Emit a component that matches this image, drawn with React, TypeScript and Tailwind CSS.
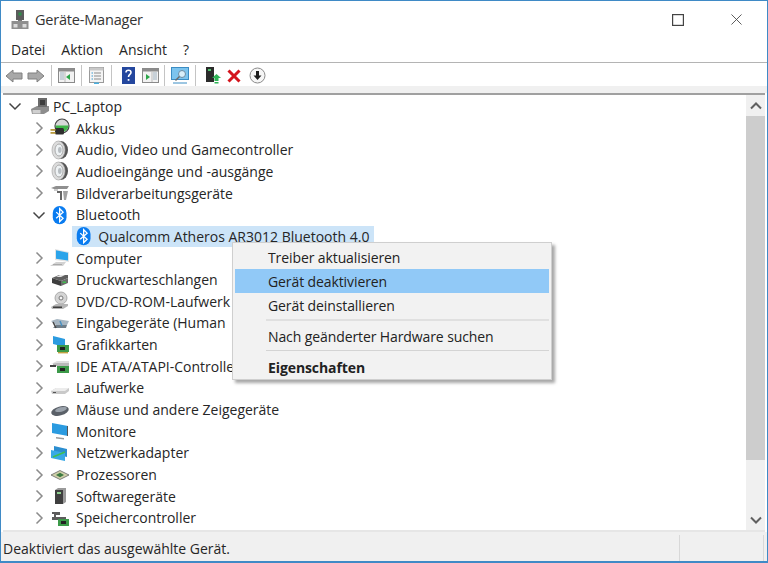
import React from "react";
import { X } from "lucide-react";

const Bt = () => (
  <svg width="15.3" height="20.4" viewBox="0 0 20 24">
    <rect x="1" y="0" width="18" height="24" rx="9" fill="#0a7cf0" />
    <path d="M5.500 8l9 8-4.500 4.500V3.500l4.500 4.500-9 8" fill="none" stroke="#fff" strokeWidth="1.700" />
  </svg>
);

const Right = () => (
  <svg width="16" height="16" viewBox="0 0 16 16" className="shrink-0">
    <path d="M5.500 2.500l5.500 5.500-5.500 5.500" fill="none" stroke="#8c8c8c" strokeWidth="1.500" />
  </svg>
);
const Down = ({ c = "#444" }: { c?: string }) => (
  <svg width="16" height="16" viewBox="0 0 16 16" className="shrink-0">
    <path d="M2.500 5.500l5.500 5.500 5.500-5.500" fill="none" stroke={c} strokeWidth="1.500" />
  </svg>
);

const S = ({ children }: { children: React.ReactNode }) => (
  <svg width="20" height="20" viewBox="0 0 20 20">{children}</svg>
);

const icons: Record<string, React.ReactNode> = {
  pc: <S><path d="M1 13l6-3h12v5l-5 3H2z" fill="#8d8d8d" /><rect x="8" y="2" width="9" height="9" fill="#6b6b6b" /><rect x="10" y="4" width="5" height="5" fill="#3c3c3c" /><rect x="2.500" y="14" width="8" height="3.500" fill="#d0d0d0" /></S>,
  akku: <S><circle cx="12" cy="8" r="7" fill="#d8d8d8" stroke="#444" strokeWidth="1.200" /><path d="M5.500 7.500h13a6.500 6.500 0 0 1-13 0z" fill="#3fb548" /><rect x="5" y="10" width="9" height="6.500" rx="1.500" fill="#2e2e2e" /><rect x="0.500" y="11" width="5" height="1.800" fill="#b89a3c" /><rect x="0.500" y="14" width="5" height="1.800" fill="#b89a3c" /></S>,
  audio: <S><ellipse cx="11" cy="10" rx="7" ry="9" fill="#565656" /><ellipse cx="8.500" cy="10" rx="6.500" ry="9" fill="#dcdcdc" stroke="#a8a8a8" strokeWidth="0.700" /><ellipse cx="9" cy="10" rx="4" ry="6" fill="#eef2f4" stroke="#9a9a9a" strokeWidth="0.800" /><ellipse cx="9.800" cy="10" rx="1.800" ry="3" fill="#b8bec2" /></S>,
  img: <S><path d="M1 5l5-2h13l-2 3H4z" fill="#8f8f8f" /><rect x="4" y="6" width="4" height="2" fill="#ccc" /><path d="M7 8h5v9h-2v-7H7z" fill="#666" /><path d="M13 8h5l-2 9h-2z" fill="#a2a2a2" /></S>,
  computer: <S><path d="M5 1l14 3v10L5 12z" fill="#e4e4e4" /><path d="M6 2.200l12 2.600v7.800L6 10.800z" fill="#2ba4ea" /><path d="M0 18l6-4h10l-3 4z" fill="#d2d2d2" /><path d="M3 16.500h9" stroke="#aaa" /></S>,
  print: <S><path d="M2 8l7-3h9v3l-7 3z" fill="#5f5f5f" /><path d="M2 8l9 3v5l-9-3z" fill="#3e3e3e" /><path d="M11 11l7-3v5l-7 3z" fill="#6c6c6c" /><path d="M6 7l4-2h5l-4 2z" fill="#e2e2e2" /><rect x="12.500" y="11.500" width="3.500" height="1.500" fill="#3fbf4f" /></S>,
  dvd: <S><circle cx="11" cy="7" r="6" fill="#d4d4d4" stroke="#9c9c9c" strokeWidth="0.800" /><circle cx="11" cy="7" r="2" fill="#f5f5f5" stroke="#777" /><path d="M1 16l5-3h12v2l-5 3H2z" fill="#b5b5b5" /><rect x="3" y="15.500" width="9" height="1.500" fill="#3f3f3f" /></S>,
  input: <S><path d="M1 8l6-2 12 2-2 4H6z" fill="#a7b6c2" /><path d="M6 12h11l-1 3H3z" fill="#6f7d88" /><path d="M3 9l3 6" stroke="#4a4a4a" strokeWidth="1.500" /><path d="M10 8l2 5" stroke="#4a90c0" strokeWidth="1.500" /></S>,
  gpu: <S><path d="M3 1l12 3v8L3 9z" fill="#2b9be0" /><rect x="7" y="10" width="12" height="7" fill="#3c9a49" /><rect x="10" y="12" width="5" height="3" fill="#222" /><rect x="8" y="17" width="10" height="1.400" fill="#c0a040" /></S>,
  ide: <S><path d="M3 7h16v3H3z" fill="#b9b9b9" /><path d="M1 8l6-3h12v2H7z" fill="#dedede" /><rect x="7" y="10" width="12" height="7" fill="#3c9a49" /><rect x="10" y="12" width="5" height="3" fill="#222" /><rect x="0" y="9" width="6" height="2" fill="#444" /></S>,
  drive: <S><path d="M1 13l5-3h13v3l-4 3H2z" fill="#c9c9c9" /><path d="M6 10h13l-4 3H1z" fill="#ececec" /><rect x="3" y="14" width="3" height="1" fill="#555" /></S>,
  mouse: <S><ellipse cx="10" cy="11" rx="9" ry="4.500" transform="rotate(-14 10 11)" fill="#5a6068" /><ellipse cx="11" cy="9.500" rx="6" ry="2.200" transform="rotate(-14 11 9.500)" fill="#9aa2ab" /></S>,
  monitor: <S><path d="M2 2l16 3v10L2 12z" fill="#2b9be0" /><path d="M17 5h1v10h-1z" fill="#555" /><path d="M6 16l8 1v1.500l-8-1z" fill="#9a9a9a" /></S>,
  net: <S><path d="M4 3l13 3v8L4 11z" fill="#2b8ed0" /><path d="M1 7l14 3v8L1 15z" fill="#37a9e6" /><path d="M3 14l12-5" stroke="#3fbf4f" strokeWidth="1.500" /></S>,
  cpu: <S><path d="M1 10l9-4.500 9 4.500-9 4.500z" fill="#cfcfa8" stroke="#666" strokeWidth="0.800" /><path d="M6 10l4-2.200 4 2.200-4 2.200z" fill="#3c7a42" /></S>,
  soft: <S><path d="M5 4l3-2h8v14l-3 2H5z" fill="#9a9a9a" /><path d="M5 4h8v14H5z" fill="#3f3f3f" /><rect x="7" y="6" width="4" height="2" fill="#8fd08f" /></S>,
  storage: <S><path d="M2 4h8v3H6v2h10v3H2V9h2V6H2z" fill="#5c5c5c" /><rect x="8" y="11" width="11" height="7" fill="#3c9a49" /><rect x="11" y="13" width="5" height="3" fill="#222" /></S>,
};

const rows: [string, string][] = [
  ["akku", "Akkus"],
  ["audio", "Audio, Video und Gamecontroller"],
  ["audio", "Audioeingänge und -ausgänge"],
  ["img", "Bildverarbeitungsgeräte"],
];
const rows2: [string, string][] = [
  ["computer", "Computer"],
  ["print", "Druckwarteschlangen"],
  ["dvd", "DVD/CD-ROM-Laufwerk"],
  ["input", "Eingabegeräte (Human"],
  ["gpu", "Grafikkarten"],
  ["ide", "IDE ATA/ATAPI-Controlle"],
  ["drive", "Laufwerke"],
  ["mouse", "Mäuse und andere Zeigegeräte"],
  ["monitor", "Monitore"],
  ["net", "Netzwerkadapter"],
  ["cpu", "Prozessoren"],
  ["soft", "Softwaregeräte"],
  ["storage", "Speichercontroller"],
];

const Row = ({ icon, label }: { icon: string; label: string }) => (
  <div className="flex h-[21.67px] items-center whitespace-nowrap pl-[28px]">
    <Right />
    <span className="ml-[3px] flex w-[20px] shrink-0 justify-center">{icons[icon]}</span>
    <span className="ml-[6px]">{label}</span>
  </div>
);

const Sep = () => <div className="mx-[4px] h-[22px] w-px bg-[#c4c4c4]" />;

const TB = ({ children, w = 22 }: { children: React.ReactNode; w?: number }) => (
  <div className="flex items-center justify-center" style={{ width: w }}>{children}</div>
);

const Win = ({ variant }: { variant: "l" | "r" }) => (
  <svg width="17" height="15" viewBox="0 0 17 15">
    <rect x="0.500" y="0.500" width="16" height="14" fill="#f2f2f2" stroke="#8a8a8a" />
    <rect x="1" y="1" width="15" height="2.500" fill="#8c8c8c" />
    {variant === "l" && <><path d="M2 5h4M2 7h4M2 9h4M2 11h4" stroke="#9db0bf" /><path d="M7 4v10" stroke="#bbb" /><path d="M12 6v6l-4-3z" fill="#2ca64a" /></>}
    {variant === "r" && <><path d="M11 5h4M11 7h4M11 9h4M11 11h4" stroke="#9db0bf" /><path d="M10 4v10" stroke="#bbb" /><path d="M4 6v6l4-3z" fill="#2ca64a" /></>}
  </svg>
);

export default function App() {
  return (
    <div className="flex h-[563px] w-[768px] flex-col overflow-hidden border border-b-2 border-[#3f8ac6] bg-white font-['Open_Sans','Liberation_Sans',sans-serif] text-[14px] text-[#262626]">
      <div className="flex h-[37px] shrink-0 items-center pl-[10px]">
        <svg width="18" height="19" viewBox="0 0 18 19">
          <rect x="5" y="0" width="8" height="10" fill="#5c5c5c" />
          <rect x="7.500" y="2.500" width="3" height="3" fill="#2f8f4a" />
          <rect x="7" y="10" width="4" height="3" fill="#777" />
          <rect x="0.500" y="11" width="17" height="8" fill="#8f8f8f" />
          <rect x="2.500" y="14" width="4" height="3.500" fill="#dcdcdc" />
          <rect x="11.500" y="14" width="4" height="3.500" fill="#dcdcdc" />
        </svg>
        <span className="ml-[6px] text-[14.5px] tracking-[-0.2px] text-[#333]">Geräte-Manager</span>
        <div className="ml-auto flex items-center text-[#444]">
          <svg width="12" height="12" viewBox="0 0 12 12" className="mr-[43px]"><rect x="0.600" y="0.600" width="10.800" height="10.800" fill="none" stroke="#444" strokeWidth="1.200" /></svg>
          <X size={19} strokeWidth={1.1} className="mr-[21px]" />
        </div>
      </div>

      <div className="flex h-[25px] shrink-0 items-center gap-[16px] border-b border-[#b4b4b4] pl-[10px] pb-[2px]">
        <span>Datei</span>
        <span>Aktion</span>
        <span>Ansicht</span>
        <span>?</span>
      </div>

      <div className="flex h-[23px] shrink-0 items-center pl-[2px] pt-[2px]">
        <TB><svg width="18" height="14" viewBox="0 0 18 14"><path d="M1 7l7-6v3h9v6H8v3z" fill="#a8a8a8" stroke="#808080" /></svg></TB>
        <TB><svg width="18" height="14" viewBox="0 0 18 14"><path d="M17 7l-7-6v3H1v6h9v3z" fill="#a8a8a8" stroke="#808080" /></svg></TB>
        <Sep />
        <TB w={21}><Win variant="l" /></TB>
        <Sep />
        <TB w={21}>
          <svg width="15" height="17" viewBox="0 0 15 17">
            <rect x="0.500" y="0.500" width="14" height="15" fill="#f4f4f4" stroke="#9a9a9a" />
            <rect x="0.500" y="0.500" width="14" height="3" fill="#c8c8c8" />
            <path d="M5 6h7M5 9h7M5 12h7" stroke="#8a8a8a" />
            <path d="M2.500 6h1.500M2.500 9h1.500M2.500 12h1.500" stroke="#3a9ad0" />
            <rect x="5" y="15.500" width="5" height="1.500" fill="#4ab0e0" />
          </svg>
        </TB>
        <Sep />
        <TB w={24}>
          <svg width="13" height="17" viewBox="0 0 13 17">
            <rect width="13" height="17" fill="#24479e" />
            <path d="M4 5.500c0-3 5-3 5 0 0 2-2.500 2-2.500 4.500" stroke="#fff" strokeWidth="1.600" fill="none" />
            <rect x="5.700" y="12" width="1.700" height="1.800" fill="#fff" />
          </svg>
        </TB>
        <TB w={20}><Win variant="r" /></TB>
        <Sep />
        <TB w={22}>
          <svg width="18" height="17" viewBox="0 0 18 17">
            <rect x="0.500" y="0.500" width="17" height="12" fill="#7cc4ee" stroke="#3b8dc4" />
            <circle cx="11" cy="7" r="3.500" fill="#d9effa" stroke="#6b8ca3" />
            <path d="M8.500 9.500l-4 4" stroke="#6b6b6b" strokeWidth="1.500" />
            <path d="M2 16h14" stroke="#3b8dc4" />
          </svg>
        </TB>
        <Sep />
        <TB w={26}>
          <svg width="16" height="17" viewBox="0 0 16 17">
            <rect x="1" y="0" width="8" height="15" fill="#2b2b2b" />
            <rect x="3" y="2" width="3" height="2" fill="#4fc36b" />
            <path d="M11.500 7l4.500 4h-2.500v3h-4v-3H7z" fill="#2fb457" />
            <rect x="9.500" y="15" width="4" height="1.500" fill="#2fb457" />
          </svg>
        </TB>
        <TB w={16}>
          <svg width="14" height="14" viewBox="0 0 14 14"><path d="M1.500 1.500l11 11M12.500 1.500l-11 11" stroke="#d4141c" strokeWidth="3" /></svg>
        </TB>
        <TB w={30}>
          <svg width="17" height="17" viewBox="0 0 17 17">
            <circle cx="8.500" cy="8.500" r="7.500" fill="#f6f6f6" stroke="#8a8a8a" />
            <path d="M8.500 13l-4-4.500H7V4h3v4.500h2.500z" fill="#1c1c1c" />
          </svg>
        </TB>
      </div>

      <div className="h-[7px] shrink-0 bg-[#f0f0f0]" />

      <div className="relative mx-[2px] flex h-[439px] shrink-0 border-y-2 border-t-[#a0a0a0] border-b-[#e6e6e6]">
        <div className="min-w-0 flex-1 overflow-hidden pt-[0.6px]">
          <div className="flex h-[21.67px] items-center pl-[4px]">
            <Down />
            <span className="ml-[7px] flex w-[20px] justify-center">{icons.pc}</span>
            <span className="ml-[3px]">PC_Laptop</span>
          </div>
          {rows.map(([i, l]) => <Row key={l} icon={i} label={l} />)}
          <div className="flex h-[21.67px] items-center pl-[28px]">
            <Down />
            <span className="ml-[3px] flex w-[20px] justify-center"><Bt /></span>
            <span className="ml-[6px]">Bluetooth</span>
          </div>
          <div className="flex h-[21.67px] items-center pl-[69px]">
            <div className="flex h-[21px] w-[302px] items-center whitespace-nowrap bg-[#cce4f8] pl-[4px]">
              <Bt />
              <span className="ml-[7px]">Qualcomm Atheros AR3012 Bluetooth 4.0</span>
            </div>
          </div>
          {rows2.map(([i, l]) => <Row key={l} icon={i} label={l} />)}
        </div>

        <div className="flex w-[19px] shrink-0 flex-col items-center bg-[#f0f0f0]">
          <div className="flex h-[21px] shrink-0 items-center justify-center">
            <svg width="14" height="14" viewBox="0 0 14 14"><path d="M2 9.500l5-5 5 5" fill="none" stroke="#606060" strokeWidth="2" /></svg>
          </div>
          <div className="h-[344px] w-full shrink-0 bg-[#cdcdcd]" />
          <div className="flex flex-1 items-end justify-center pb-[3px]">
            <svg width="14" height="14" viewBox="0 0 14 14"><path d="M2 4.500l5 5 5-5" fill="none" stroke="#606060" strokeWidth="2" /></svg>
          </div>
        </div>

        <div className="absolute left-[229px] top-[147px] w-[320px] border border-[#cfcfcf] bg-[#f2f2f2] px-[2px] pb-[1px] pt-[2px] tracking-[-0.1px] text-[#222] shadow-[3px_3px_3px_rgba(0,0,0,0.35)]">
          <div className="flex h-[24px] items-center pl-[33px] pt-[1px]">Treiber aktualisieren</div>
          <div className="flex h-[24px] items-center bg-[#91c9f7] pl-[33px] pt-[1px]">Gerät deaktivieren</div>
          <div className="flex h-[24px] items-center pl-[33px] pt-[1px]">Gerät deinstallieren</div>
          <div className="ml-[31px] mb-[3px] mt-[2px] h-[2px] bg-[#e0e0e0]" />
          <div className="flex h-[24px] items-center pl-[33px]">Nach geänderter Hardware suchen</div>
          <div className="ml-[31px] mb-[4px] mt-[2px] h-px bg-[#d4d4d4]" />
          <div className="flex h-[23px] items-center pl-[33px] pt-[1px] font-bold">Eigenschaften</div>
        </div>
      </div>

      <div className="flex min-h-0 flex-1 bg-[#f0f0f0] pt-[3px]">
        <div className="flex w-[679px] items-center border-r border-[#d8d8d8] pl-[2px]">Deaktiviert das ausgewählte Gerät.</div>
        <div className="w-[84px] border-r border-[#d8d8d8]" />
      </div>
    </div>
  );
}
